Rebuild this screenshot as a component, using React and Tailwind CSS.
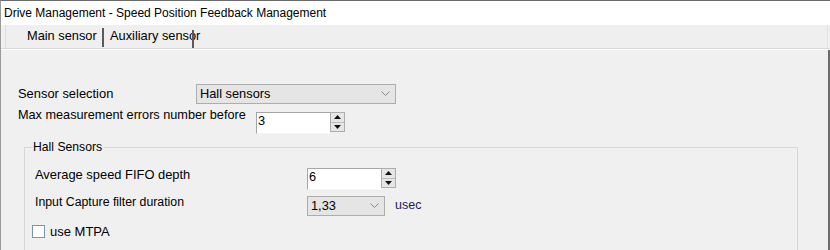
import React from "react";

function Chevron({ className = "" }) {
  return (
    <svg width="9" height="6" viewBox="0 0 9 6" className={className}>
      <path d="M0.5 0.5 L4.5 4.5 L8.5 0.5" fill="none" stroke="#8a8a8a" strokeWidth="1" />
    </svg>
  );
}

function Combo({ value, width }) {
  return (
    <div
      className="h-[20px] border border-[#adadad] bg-[#e5e5e5] flex items-center justify-between pl-[3px] pr-[5px]"
      style={{ width }}
    >
      <span className="leading-none text-[12.8px]">{value}</span>
      <Chevron />
    </div>
  );
}

function Spin({ value, inputW }) {
  return (
    <div className="flex h-[22px] items-stretch">
      <div
        className="h-full bg-white border-l border-t border-[#a6a6a6] border-b border-b-[#f4f4f4] flex items-start pl-[1px] pt-[1px]"
        style={{ width: inputW }}
      >
        <span className="leading-[14px] text-[12.8px]">{value}</span>
      </div>
      <div className="h-full bg-white border-t border-[#a6a6a6] w-[3px]" />
      <div className="w-[15px] h-[20px] border border-[#adadad] bg-[#e6e6e6] flex flex-col">
        <div className="flex-1 flex items-center justify-center border-b border-[#bdbdbd]">
          <svg width="7" height="4" viewBox="0 0 7 4">
            <path d="M3.5 0 L7 4 L0 4 Z" fill="#111" />
          </svg>
        </div>
        <div className="flex-1 flex items-center justify-center">
          <svg width="7" height="4" viewBox="0 0 7 4">
            <path d="M0 0 L7 0 L3.5 4 Z" fill="#111" />
          </svg>
        </div>
      </div>
    </div>
  );
}

export default function App() {
  return (
    <div
      className="w-[830px] h-[250px] overflow-hidden bg-[#f0f0f0] text-[12px] text-black border-t border-[#6a6a6a] border-l border-l-[#9a9a9a] flex flex-col"
      style={{ fontFamily: '"Liberation Sans", Arial, sans-serif' }}
    >
      {/* title */}
      <div className="h-[24px] bg-white flex items-center pl-[3px] shrink-0">
        <span className="text-[12px] leading-none">Drive Management - Speed Position Feedback Management</span>
      </div>

      {/* tab strip */}
      <div className="h-[23px] bg-[#efefef] shrink-0 flex items-stretch border-l border-[#dcdcdc] ml-[4px] border-r border-r-[#e2e2e2] mr-[2px]">
        <div className="flex items-center pl-[21px] w-[96px]">
          <span className="leading-none text-[12.8px]">Main sensor</span>
        </div>
        <div className="w-[2px] bg-[#5a5a5a] mt-[3px] mb-[1px]" />
        <div className="flex items-center pl-[6px] relative">
          <span className="leading-none text-[12.8px]">Auxiliary sensor</span>
          <div className="absolute left-[88px] top-[5px] w-[2px] h-[18px] bg-[#5a5a5a]" />
        </div>
      </div>

      {/* separator */}
      <div className="h-[1px] bg-[#d8d8d8] shrink-0" />
      <div className="h-[1px] bg-white shrink-0" />

      {/* content */}
      <div className="flex-1 flex border-r-2 border-[#6a6a6a]">
        <div className="flex-1 pl-[17px] flex flex-col">
          {/* row 1 */}
          <div className="mt-[34px] flex items-center h-[20px]">
            <span className="w-[178px] leading-none text-[12.9px]">Sensor selection</span>
            <Combo value="Hall sensors" width={200} />
          </div>

          {/* row 2 */}
          <div className="mt-[8px] flex items-start h-[22px]">
            <span className="w-[238px] leading-[14px] -mt-[4px] text-[12.7px]">Max measurement errors number before</span>
            <Spin value="3" inputW={71} />
          </div>

          {/* group */}
          <div className="relative mt-[13px] ml-[6px] w-[774px] flex-1 border-t border-l border-r border-[#d7d7d7] flex flex-col">
            <span className="absolute -top-[8px] left-[7px] bg-[#f0f0f0] px-[1px] leading-[14px] text-[12.2px]">Hall Sensors</span>

            <div className="mt-[20px] ml-[10px] flex items-start h-[22px]">
              <span className="w-[272px] leading-[14px] text-[12.9px]">Average speed FIFO depth</span>
              <Spin value="6" inputW={71} />
            </div>

            <div className="mt-[6px] ml-[10px] flex items-center h-[20px]">
              <span className="w-[272px] leading-[14px] -mt-[9px] text-[12.3px]">Input Capture filter duration</span>
              <Combo value="1,33" width={78} />
              <span className="ml-[10px] text-[#1c1c5c] leading-none -mt-[1px] text-[12.5px]">usec</span>
            </div>

            <div className="mt-[9px] ml-[7px] flex items-center">
              <div className="w-[13px] h-[13px] border border-[#7c94ad] bg-white" />
              <span className="ml-[5px] leading-none text-[13px]">use MTPA</span>
            </div>
          </div>
        </div>
      </div>
    </div>
  );
}
